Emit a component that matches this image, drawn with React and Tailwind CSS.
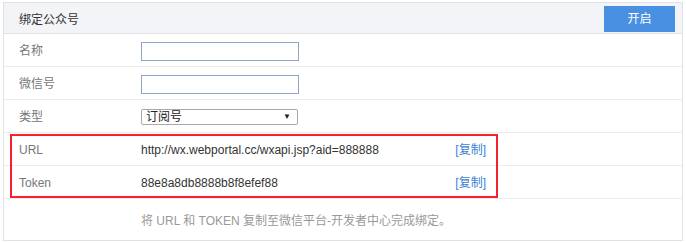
import React from 'react';

const font = { fontFamily: '"Microsoft YaHei", "Liberation Sans", "Noto Sans CJK SC", sans-serif' };

function Row({ label, children, extra }) {
    return (
        <div className="flex items-center h-[33px] pt-[2px] border-b border-[#ececec]">
            <div className="w-[137px] pl-[15px] text-[#777]">{label}</div>
            <div className="flex-1 flex items-center">{children}</div>
            {extra}
        </div>
    );
}

export default function App() {
    return (
        <div className="w-[686px] h-[243px] bg-white pt-[2px] pl-[3px] text-[12px]" style={font}>
            <div className="relative w-[680px] border border-[#e2e2e2]">
                <div className="flex items-center justify-between h-[31px] bg-[#f3f4f7] border-b border-[#e2e2e2] pl-[15px] pr-[7px]">
                    <span className="text-[#333] pt-[3px]">绑定公众号</span>
                    <button className="w-[71px] h-[26px] mt-[1px] bg-[#4a90e2] text-white text-[12px]">开启</button>
                </div>
                <Row label="名称">
                    <input className="w-[158px] h-[19px] border border-[#8aa6c8] outline-none" />
                </Row>
                <Row label="微信号">
                    <input className="w-[158px] h-[19px] border border-[#8aa6c8] outline-none" />
                </Row>
                <Row label="类型">
                    <div className="w-[157px] h-[16px] border border-[#a9a9a9] rounded-[2px] flex items-center justify-between pl-[4px] pr-[6px] text-[#222]">
                        <span>订阅号</span>
                        <span className="text-[8px]">▼</span>
                    </div>
                </Row>
                <Row label="URL" extra={<a className="text-[#3a7fd5] mr-[196px]">[复制]</a>}>
                    <span className="text-[#333]">http://wx.webportal.cc/wxapi.jsp?aid=888888</span>
                </Row>
                <Row label="Token" extra={<a className="text-[#3a7fd5] mr-[196px]">[复制]</a>}>
                    <span className="text-[#333]">88e8a8db8888b8f8efef88</span>
                </Row>
                <div className="h-[41px] flex items-center pl-[137px] pt-[2px] text-[#999]">
                    将 URL 和 TOKEN 复制至微信平台-开发者中心完成绑定。
                </div>
                <div className="absolute left-[6px] top-[131px] w-[488px] h-[64px] border-2 border-[#f5222d]"></div>
            </div>
        </div>
    );
}
